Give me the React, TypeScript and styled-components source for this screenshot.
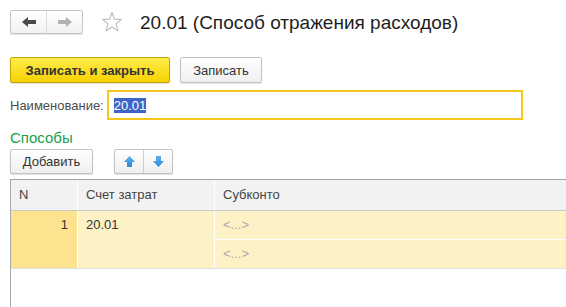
import styled, {createGlobalStyle} from 'styled-components';

const GlobalStyle = createGlobalStyle`
    html, body {
        margin: 0;
        padding: 0;
        background: #fff;
    }
    body {
        font-family: "Liberation Sans", Arial, sans-serif;
        font-size: 13px;
        color: #333;
    }
`;

function ArrowLeft({color}: {color: string}) {
    return (
        <svg width="14" height="10" viewBox="0 0 14 10">
            <path d="M0 5 L6 0 L6 3 L14 3 L14 7 L6 7 L6 10 Z" fill={color} />
        </svg>
    );
}

function ArrowRight({color}: {color: string}) {
    return (
        <svg width="14" height="10" viewBox="0 0 14 10">
            <path d="M14 5 L8 0 L8 3 L0 3 L0 7 L8 7 L8 10 Z" fill={color} />
        </svg>
    );
}

function Star() {
    return (
        <svg width="22" height="22" viewBox="0 0 22 22">
            <polygon
                points="11,1.5 13.6,8.2 20.6,8.4 15.1,12.8 17,19.8 11,15.8 5,19.8 6.9,12.8 1.4,8.4 8.4,8.2"
                fill="none"
                stroke="#bdbdbd"
                strokeWidth="1.1"
                strokeLinejoin="round"
            />
        </svg>
    );
}

function BlueArrow({down}: {down?: boolean}) {
    const id = down ? 'gDown' : 'gUp';
    return (
        <svg width="11" height="11" viewBox="0 0 11 11">
            <defs>
                <linearGradient id={id} x1="0" y1="0" x2="0" y2="1">
                    <stop offset="0" stopColor="#5db3ef" />
                    <stop offset="1" stopColor="#2d86d6" />
                </linearGradient>
            </defs>
            {down
                ? <path d="M3 0 L8 0 L8 5 L11 5 L5.5 11 L0 5 L3 5 Z" fill={`url(#${id})`} />
                : <path d="M5.5 0 L11 6 L8 6 L8 11 L3 11 L3 6 L0 6 Z" fill={`url(#${id})`} />}
        </svg>
    );
}

export default function App() {
    return (
        <Page>
            <GlobalStyle />
            <TitleBar>
                <NavGroup>
                    <NavButton><ArrowLeft color="#4a4a4a" /></NavButton>
                    <NavButton><ArrowRight color="#b3b3b3" /></NavButton>
                </NavGroup>
                <StarWrap><Star /></StarWrap>
                <Title>20.01 (Способ отражения расходов)</Title>
            </TitleBar>

            <Toolbar>
                <Button primary width={160}>Записать и закрыть</Button>
                <Button width={82}>Записать</Button>
            </Toolbar>

            <FieldRow>
                <Label>Наименование:</Label>
                <Field><Selected>20.01</Selected></Field>
            </FieldRow>

            <SectionTitle>Способы</SectionTitle>

            <Toolbar compact>
                <Button width={83} height={25}>Добавить</Button>
                <MoveGroup>
                    <MoveButton><BlueArrow /></MoveButton>
                    <MoveButton><BlueArrow down /></MoveButton>
                </MoveGroup>
            </Toolbar>

            <Table>
                <HeadRow>
                    <HeadCell>N</HeadCell>
                    <HeadCell>Счет затрат</HeadCell>
                    <HeadCell>Субконто</HeadCell>
                </HeadRow>
                <BodyRow>
                    <NumCell>1</NumCell>
                    <AccountCell>20.01</AccountCell>
                    <SubCell>&lt;...&gt;</SubCell>
                    <SubCell>&lt;...&gt;</SubCell>
                </BodyRow>
                <Empty />
            </Table>
        </Page>
    );
}

const Page = styled.div`
    display: flex;
    flex-direction: column;
    min-height: 100vh;
    box-sizing: border-box;
    padding: 10px 0 0 10px;
    overflow: hidden;
`;

const TitleBar = styled.div`
    display: flex;
    align-items: center;
    height: 24px;
`;

const NavGroup = styled.div`
    display: flex;
    width: 73px;
    height: 24px;
    box-sizing: border-box;
    border: 1px solid #c6c6c6;
    border-radius: 2px;
    background: linear-gradient(#ffffff, #f1f1f1);
    box-shadow: 0 1px 0 #e4e4e4;
`;

const NavButton = styled.div`
    flex: 1;
    display: flex;
    align-items: center;
    justify-content: center;

    & + & {
        border-left: 1px solid #dcdcdc;
    }
`;

const StarWrap = styled.div`
    display: flex;
    margin-left: 18px;
`;

const Title = styled.div`
    margin-left: 17px;
    font-size: 19px;
    color: #1e1e1e;
    padding-top: 1px;
`;

const Toolbar = styled.div<{compact?: boolean}>`
    display: flex;
    align-items: center;
    gap: ${p => p.compact ? '21px' : '10px'};
    margin-top: ${p => p.compact ? '1px' : '23px'};
`;

const Button = styled.div<{primary?: boolean; width: number; height?: number}>`
    display: flex;
    align-items: center;
    justify-content: center;
    box-sizing: border-box;
    width: ${p => p.width}px;
    height: ${p => p.height ?? 26}px;
    border-radius: 2px;
    border: 1px solid ${p => p.primary ? '#c3a300' : '#c2c2c2'};
    background: ${p => p.primary
        ? 'linear-gradient(#ffec4d, #f6d200)'
        : 'linear-gradient(#ffffff, #efefef)'};
    box-shadow: 0 1px 1px rgba(0, 0, 0, 0.12);
    font-weight: ${p => p.primary ? 'bold' : 'normal'};
    color: #333;
`;

const MoveGroup = styled.div`
    display: flex;
    width: 59px;
    height: 25px;
    box-sizing: border-box;
    border: 1px solid #c2c2c2;
    border-radius: 2px;
    background: linear-gradient(#ffffff, #efefef);
    box-shadow: 0 1px 1px rgba(0, 0, 0, 0.12);
`;

const MoveButton = styled.div`
    flex: 1;
    display: flex;
    align-items: center;
    justify-content: center;

    & + & {
        border-left: 1px solid #cfcfcf;
    }
`;

const FieldRow = styled.div`
    display: flex;
    align-items: center;
    margin-top: 7px;
`;

const Label = styled.div`
    color: #4d4d4d;
    margin-right: 3px;
`;

const Field = styled.div`
    display: flex;
    align-items: center;
    box-sizing: border-box;
    width: 416px;
    height: 30px;
    padding-left: 5px;
    border: 2px solid #f6c71a;
`;

const Selected = styled.span`
    background: #3d64c8;
    color: #fff;
    line-height: 15px;
`;

const SectionTitle = styled.div`
    margin-top: 8px;
    font-size: 15px;
    line-height: 20px;
    color: #17a04a;
`;

const Table = styled.div`
    flex: 1;
    display: flex;
    flex-direction: column;
    margin-top: 5px;
    border-left: 1px solid #a8a8a8;
    border-top: 1px solid #a3a3a3;
`;

const columns = '66px 136px 1fr';

const HeadRow = styled.div`
    display: grid;
    grid-template-columns: ${columns};
    column-gap: 1px;
    height: 31px;
    box-sizing: border-box;
    background: #fff;
    border-bottom: 1px solid #cacaca;
`;

const HeadCell = styled.div`
    background: #f2f2f2;
    padding-left: 8px;
    line-height: 30px;
    color: #444;
`;

const BodyRow = styled.div`
    display: grid;
    grid-template-columns: ${columns};
    grid-template-rows: 28px 28px;
    gap: 1px;
    background: #fff;
    border-bottom: 1px solid #e0e0e0;
`;

const NumCell = styled.div`
    grid-row: span 2;
    background: #fde38f;
    text-align: right;
    padding-right: 9px;
    line-height: 28px;
    color: #333;
`;

const AccountCell = styled.div`
    grid-row: span 2;
    background: #fdf1c6;
    padding-left: 8px;
    line-height: 28px;
    color: #333;
`;

const SubCell = styled.div`
    background: #fdf1c6;
    padding-left: 8px;
    line-height: 28px;
    color: #a8a8a8;
`;

const Empty = styled.div`
    flex: 1;
`;
